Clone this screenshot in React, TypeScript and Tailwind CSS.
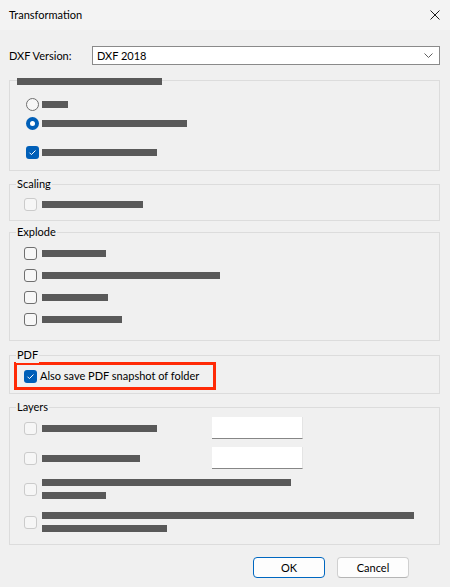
const font = "font-['Segoe_UI','Lato','Noto_Sans',sans-serif]"

function Check({ checked = false, dim = false }: { checked?: boolean; dim?: boolean }) {
  if (checked) {
    return (
      <div className="w-[13px] h-[13px] shrink-0 rounded-[3px] bg-[#005fb8] flex items-center justify-center">
        <svg width="9" height="9" viewBox="0 0 9 9" fill="none">
          <path d="M1.5 4.7 3.4 6.6 7.5 2.5" stroke="white" strokeWidth="1" />
        </svg>
      </div>
    )
  }
  return (
    <div
      className={
        dim
          ? 'w-[13px] h-[13px] shrink-0 rounded-[3px] border border-[#cbcbcb] bg-[#f6f6f6]'
          : 'w-[13px] h-[13px] shrink-0 rounded-[3px] border border-[#6f6f6f] bg-[#f7f7f7]'
      }
    />
  )
}

function Radio({ checked = false }: { checked?: boolean }) {
  if (checked) {
    return (
      <div className="w-[13px] h-[13px] shrink-0 rounded-full bg-[#005fb8] flex items-center justify-center">
        <div className="w-[5px] h-[5px] rounded-full bg-white" />
      </div>
    )
  }
  return <div className="w-[13px] h-[13px] shrink-0 rounded-full border border-[#6f6f6f] bg-[#f7f7f7]" />
}

export default function App() {
  return (
    <div className={`w-[450px] h-[587px] bg-[#f0f0f0] text-[11px] leading-[16px] text-black ${font}`}>
      {/* Title bar */}
      <div className="h-[30px] bg-[#f3f3f3] flex items-center justify-between pl-[9px] pr-[10px]">
        <span>Transformation</span>
        <svg width="10" height="10" viewBox="0 0 10 10" fill="none">
          <path d="M0.5 0.5 9.5 9.5M9.5 0.5 0.5 9.5" stroke="#1a1a1a" strokeWidth="1" />
        </svg>
      </div>

      <div className="pl-[9px] pr-[10px] pt-[16px]">
        {/* DXF version */}
        <div className="flex items-center h-[19px]">
          <span className="w-[83px]">DXF Version:</span>
          <div className="flex-1 h-full bg-white border border-[#8a8a8a] flex items-center justify-between pl-[4px] pr-[6px]">
            <span>DXF 2018</span>
            <svg width="9" height="5" viewBox="0 0 9 5" fill="none">
              <path d="M0.5 0.5 4.5 4.5 8.5 0.5" stroke="#606060" strokeWidth="1" />
            </svg>
          </div>
        </div>

        {/* Group 1 */}
        <div className="relative mt-[15px] border border-[#dcdcdc] pt-[17px] pb-[11px] pl-[16px]">
          <div className="absolute left-[7px] -top-[3px] w-[145px] h-[7px] bg-[#595959]" />
          <div className="flex items-center gap-[3px] h-[13px]">
            <Radio />
            <div className="w-[26px] h-[7px] bg-[#595959]" />
          </div>
          <div className="flex items-center gap-[3px] h-[13px] mt-[6px]">
            <Radio checked />
            <div className="w-[145px] h-[7px] bg-[#595959]" />
          </div>
          <div className="flex items-center gap-[3px] h-[13px] mt-[16px]">
            <Check checked />
            <div className="w-[115px] h-[7px] bg-[#595959]" />
          </div>
        </div>

        {/* Scaling */}
        <div className="relative mt-[13px] border border-[#dcdcdc] pt-[13px] pb-[9px] pl-[14px]">
          <span className="absolute left-[6px] -top-[9px] px-px bg-[#f0f0f0]">Scaling</span>
          <div className="flex items-center gap-[5px] h-[13px]">
            <Check dim />
            <div className="w-[101px] h-[7px] bg-[#595959]" />
          </div>
        </div>

        {/* Explode */}
        <div className="relative mt-[11px] border border-[#dcdcdc] pt-[14px] pb-[14px] pl-[14px] flex flex-col gap-[9px]">
          <span className="absolute left-[6px] -top-[9px] px-px bg-[#f0f0f0]">Explode</span>
          <div className="flex items-center gap-[5px] h-[13px]">
            <Check />
            <div className="w-[64px] h-[7px] bg-[#595959]" />
          </div>
          <div className="flex items-center gap-[5px] h-[13px]">
            <Check />
            <div className="w-[178px] h-[7px] bg-[#595959]" />
          </div>
          <div className="flex items-center gap-[5px] h-[13px]">
            <Check />
            <div className="w-[66px] h-[7px] bg-[#595959]" />
          </div>
          <div className="flex items-center gap-[5px] h-[13px]">
            <Check />
            <div className="w-[80px] h-[7px] bg-[#595959]" />
          </div>
        </div>

        {/* PDF */}
        <div className="relative mt-[14px] border border-[#dcdcdc] pt-[6px] pb-[3px] pl-[4px]">
          <span className="absolute left-[6px] -top-[9px] px-px bg-[#f0f0f0]">PDF</span>
          <div className="w-[202px] h-[28px] border-[3px] border-[#ff2a06] flex items-center pl-[7px]">
            <Check checked />
            <span className="ml-[3px] whitespace-nowrap">Also save PDF snapshot of folder</span>
          </div>
        </div>

        {/* Layers */}
        <div className="relative mt-[13px] border border-[#dcdcdc] pt-[9px] pb-[9px] pl-[14px]">
          <span className="absolute left-[6px] -top-[9px] px-px bg-[#f0f0f0]">Layers</span>
          <div className="flex items-center h-[22px]">
            <Check dim />
            <div className="ml-[5px] w-[170px]">
              <div className="w-[115px] h-[7px] bg-[#595959]" />
            </div>
            <div className="w-[91px] h-[22px] bg-white border-b border-[#868686] border-r border-r-[#e4e4e4]" />
          </div>
          <div className="flex items-center h-[22px] mt-[8px]">
            <Check dim />
            <div className="ml-[5px] w-[170px]">
              <div className="w-[98px] h-[7px] bg-[#595959]" />
            </div>
            <div className="w-[91px] h-[22px] bg-white border-b border-[#868686] border-r border-r-[#e4e4e4]" />
          </div>
          <div className="flex items-center mt-[7px]">
            <Check dim />
            <div className="ml-[5px] flex flex-col">
              <div className="h-[13px] flex items-center">
                <div className="w-[249px] h-[7px] bg-[#595959]" />
              </div>
              <div className="h-[13px] flex items-center">
                <div className="w-[64px] h-[7px] bg-[#595959]" />
              </div>
            </div>
          </div>
          <div className="flex items-center mt-[7px]">
            <Check dim />
            <div className="ml-[5px] flex flex-col">
              <div className="h-[13px] flex items-center">
                <div className="w-[372px] h-[7px] bg-[#595959]" />
              </div>
              <div className="h-[13px] flex items-center">
                <div className="w-[125px] h-[7px] bg-[#595959]" />
              </div>
            </div>
          </div>
        </div>

        {/* Buttons */}
        <div className="flex justify-end gap-[12px] mt-[12px] pr-[31px]">
          <button className="w-[72px] h-[21px] rounded-[4px] border border-[#0067c0] bg-[#fdfdfd] flex items-center justify-center">
            OK
          </button>
          <button className="w-[72px] h-[21px] rounded-[4px] border border-[#d0d0d0] border-b-[#b5b5b5] bg-[#fdfdfd] flex items-center justify-center">
            Cancel
          </button>
        </div>
      </div>
    </div>
  )
}
